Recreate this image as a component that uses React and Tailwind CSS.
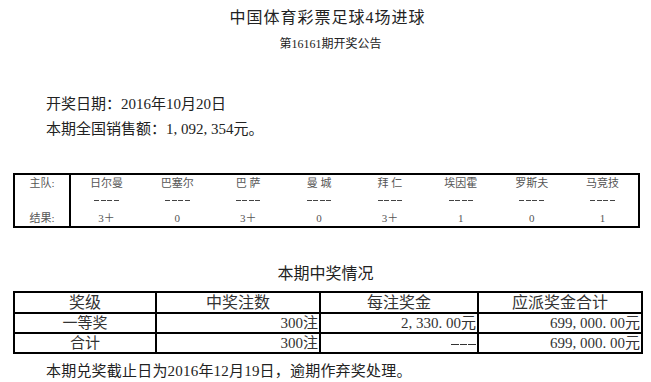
const serif = { fontFamily: '"Liberation Serif", "Noto Sans CJK SC", serif' };

const teams = ['日尔曼', '巴塞尔', '巴 萨', '曼 城', '拜 仁', '埃因霍', '罗斯夫', '马竞技'];
const results = ['3＋', '0', '3＋', '0', '3＋', '1', '0', '1'];

// SimSun style: punctuation and dashes take half an em, like the digits
function Num({ text }) {
  return (
    <>
      {text.split('').map((ch, i) => {
        if (ch === ',' || ch === '.') {
          return <span key={i} className="inline-block w-[0.5em] text-left">{ch}</span>;
        }
        if (ch === '-') {
          return <span key={i} className="inline-block w-[0.5em] h-[1px] bg-[#333] align-middle mx-[0.5px]" />;
        }
        return <span key={i}>{ch}</span>;
      })}
    </>
  );
}

const prizeRows = [
  { level: '一等奖', count: '300注', each: '2,330.00元', total: '699,000.00元' },
  { level: '合计', count: '300注', each: '---', total: '699,000.00元' },
];

export default function App() {
  return (
    <div className="w-[651px] h-[382px] bg-white text-[#222] overflow-hidden" style={serif}>
      {/* title */}
      <div className="pt-[8px] text-center text-[16px] leading-[20px] tracking-[1px] pl-[4px]">中国体育彩票足球4场进球</div>
      <div className="mt-[8px] text-center text-[12px] leading-[16px] pl-[10px]">第16161期开奖公告</div>

      {/* summary */}
      <div className="mt-[40px] pl-[46px] text-[15px] leading-[25px]">
        <div>开奖日期：2016年10月20日</div>
        <div>本期全国销售额：<Num text="1,092,354" />元。</div>
      </div>

      {/* match table */}
      <div className="mt-[31px] ml-[13px] w-[627px] border-2 border-black flex text-[11px] text-[#555]">
        <div className="w-[56px] border-r-2 border-black flex flex-col items-center">
          <div className="h-[17px] leading-[17px]">主队:</div>
          <div className="h-[17px]" />
          <div className="h-[17px] leading-[19px]">结果:</div>
        </div>
        <div className="flex-1 grid grid-cols-8">
          {teams.map((t, i) => (
            <div key={t} className="flex flex-col items-center">
              <div className="h-[17px] leading-[17px]">{t}</div>
              <div className="h-[17px] flex items-center gap-[1.5px]">
                <span className="w-[5px] h-[1px] bg-[#444]" />
                <span className="w-[5px] h-[1px] bg-[#444]" />
                <span className="w-[5px] h-[1px] bg-[#444]" />
                <span className="w-[5px] h-[1px] bg-[#444]" />
              </div>
              <div className="h-[17px] leading-[19px]">{results[i]}</div>
            </div>
          ))}
        </div>
      </div>

      {/* prize table */}
      <div className="mt-[36px] text-center text-[16px] leading-[20px]">本期中奖情况</div>
      <div className="mt-[7px] ml-[13px] w-[630px] border-2 border-black text-[#333]">
        <div className="grid grid-cols-[140px_164px_158px_1fr] h-[19px] text-[16px] leading-[19px] text-center">
          <div>奖级</div>
          <div className="border-l-2 border-black">中奖注数</div>
          <div className="border-l-2 border-black">每注奖金</div>
          <div className="border-l-2 border-black">应派奖金合计</div>
        </div>
        {prizeRows.map((r) => (
          <div key={r.level} className="grid grid-cols-[140px_164px_158px_1fr] h-[20px] border-t-2 border-black text-[15px] leading-[18px]">
            <div className="text-center">{r.level}</div>
            <div className="border-l-2 border-black text-right pr-[1px]">{r.count}</div>
            <div className="border-l-2 border-black text-right pr-[1px]"><Num text={r.each} /></div>
            <div className="border-l-2 border-black text-right pr-[1px]"><Num text={r.total} /></div>
          </div>
        ))}
      </div>

      {/* footer */}
      <div className="mt-[7px] pl-[46px] text-[15px] leading-[20px] tracking-[0.2px]">本期兑奖截止日为2016年12月19日，逾期作弃奖处理。</div>
    </div>
  );
}
